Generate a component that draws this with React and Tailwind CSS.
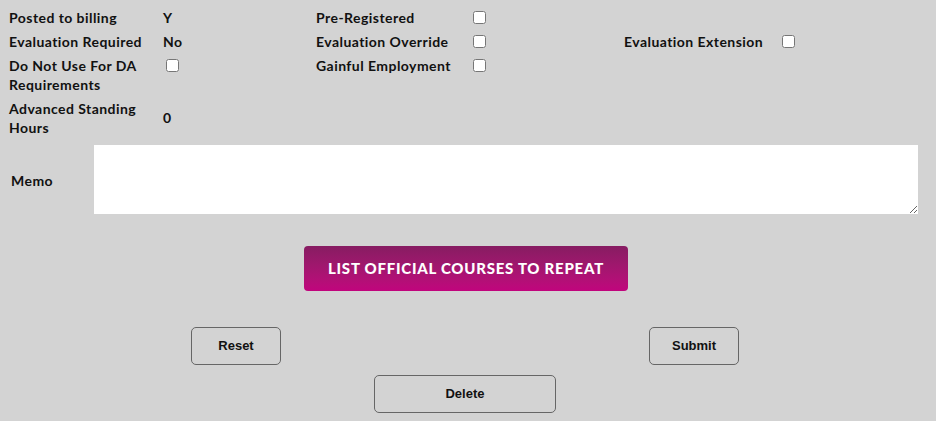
import React from 'react';

const Check = ({ className = '' }) => (
  <input type="checkbox" className={`w-[13px] h-[13px] m-0 block ${className}`} />
);

const Label = ({ children, className = '' }) => (
  <span className={`font-bold text-[14px] tracking-[0.45px] leading-[19px] text-[#111] ${className}`}>{children}</span>
);

export default function App() {
  return (
    <div className="min-h-[421px] w-[936px] bg-[#d3d3d3] font-['Lato',sans-serif]">
      <div className="grid grid-cols-[154px_153px_157px_151px_158px_1fr] pl-[9px] pt-[5px]">
        <Label className="py-[2.5px]">Posted to billing</Label>
        <Label className="py-[2.5px]">Y</Label>
        <Label className="py-[2.5px]">Pre-Registered</Label>
        <div className="flex items-center"><Check /></div>
        <div />
        <div />

        <Label className="py-[2.5px]">Evaluation Required</Label>
        <Label className="py-[2.5px]">No</Label>
        <Label className="py-[2.5px]">Evaluation Override</Label>
        <div className="flex items-center"><Check /></div>
        <Label className="py-[2.5px]">Evaluation Extension</Label>
        <div className="flex items-center"><Check /></div>

        <Label className="py-[2.5px]">Do Not Use For DA<br />Requirements</Label>
        <div className="pt-[6px]"><Check className="ml-[3px]" /></div>
        <Label className="py-[2.5px]">Gainful Employment</Label>
        <div className="pt-[6px]"><Check /></div>
        <div />
        <div />

        <Label className="py-[2.5px]">Advanced Standing<br />Hours</Label>
        <div className="flex items-center"><Label>0</Label></div>
        <div />
        <div />
        <div />
        <div />
      </div>

      <div className="flex items-center mt-[6px]">
        <div className="w-[94px] pl-[11px]"><Label>Memo</Label></div>
        <textarea className="w-[824px] h-[69px] bg-white border-0 outline-none resize block" />
      </div>

      <div className="flex justify-center mt-[32px]">
        <button className="ml-[-4px] w-[324px] h-[45px] rounded-[4px] bg-gradient-to-b from-[#871c62] to-[#c1047d] text-white font-black text-[15px] tracking-[0.75px]">
          LIST OFFICIAL COURSES TO REPEAT
        </button>
      </div>

      <div className="grid grid-cols-2 w-[916px] ml-[7px] mt-[36px] font-['Liberation_Sans',Arial,sans-serif]">
        <div className="flex justify-center">
          <button className="w-[90px] h-[38px] rounded-[5px] border border-[#666] text-[13px] font-bold text-[#111]">Reset</button>
        </div>
        <div className="flex justify-center">
          <button className="w-[90px] h-[38px] rounded-[5px] border border-[#666] text-[13px] font-bold text-[#111]">Submit</button>
        </div>
        <div className="col-span-2 flex justify-center mt-[10px]">
          <button className="w-[182px] h-[38px] rounded-[5px] border border-[#666] text-[13px] font-bold text-[#111]">Delete</button>
        </div>
      </div>
    </div>
  );
}
